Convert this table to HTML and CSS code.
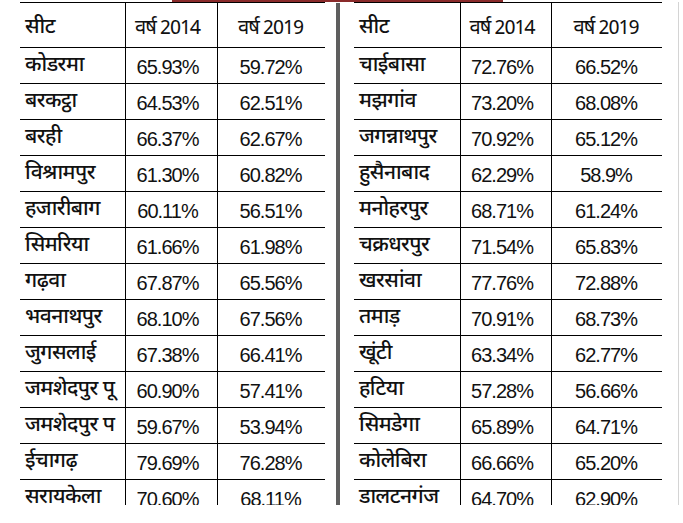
FILE: index.html
```html
<!DOCTYPE html>
<html lang="hi">
<head>
<meta charset="utf-8">
<title>मतदान प्रतिशत</title>
<link rel="stylesheet" href="styles.css">
</head>
<body>
<div class="page">
  <div class="redbar"></div>
  <div class="tables">
    <div class="tbl tbl-left">
      <div class="cell head name">सीट</div><div class="cell head num c2">वर्ष 2014</div><div class="cell head num c3">वर्ष 2019</div>
      <div class="cell name">कोडरमा</div><div class="cell num c2">65.93%</div><div class="cell num c3">59.72%</div>
      <div class="cell name">बरकट्ठा</div><div class="cell num c2">64.53%</div><div class="cell num c3">62.51%</div>
      <div class="cell name">बरही</div><div class="cell num c2">66.37%</div><div class="cell num c3">62.67%</div>
      <div class="cell name">विश्रामपुर</div><div class="cell num c2">61.30%</div><div class="cell num c3">60.82%</div>
      <div class="cell name">हजारीबाग</div><div class="cell num c2">60.11%</div><div class="cell num c3">56.51%</div>
      <div class="cell name">सिमरिया</div><div class="cell num c2">61.66%</div><div class="cell num c3">61.98%</div>
      <div class="cell name">गढ़वा</div><div class="cell num c2">67.87%</div><div class="cell num c3">65.56%</div>
      <div class="cell name">भवनाथपुर</div><div class="cell num c2">68.10%</div><div class="cell num c3">67.56%</div>
      <div class="cell name">जुगसलाई</div><div class="cell num c2">67.38%</div><div class="cell num c3">66.41%</div>
      <div class="cell name">जमशेदपुर पू</div><div class="cell num c2">60.90%</div><div class="cell num c3">57.41%</div>
      <div class="cell name">जमशेदपुर प</div><div class="cell num c2">59.67%</div><div class="cell num c3">53.94%</div>
      <div class="cell name">ईचागढ़</div><div class="cell num c2">79.69%</div><div class="cell num c3">76.28%</div>
      <div class="cell name">सरायकेला</div><div class="cell num c2">70.60%</div><div class="cell num c3">68.11%</div>
    </div>
    <div class="divider"></div>
    <div class="tbl tbl-right">
      <div class="cell head name">सीट</div><div class="cell head num c2">वर्ष 2014</div><div class="cell head num c3">वर्ष 2019</div>
      <div class="cell name">चाईबासा</div><div class="cell num c2">72.76%</div><div class="cell num c3">66.52%</div>
      <div class="cell name">मझगांव</div><div class="cell num c2">73.20%</div><div class="cell num c3">68.08%</div>
      <div class="cell name">जगन्नाथपुर</div><div class="cell num c2">70.92%</div><div class="cell num c3">65.12%</div>
      <div class="cell name">हुसैनाबाद</div><div class="cell num c2">62.29%</div><div class="cell num c3">58.9%</div>
      <div class="cell name">मनोहरपुर</div><div class="cell num c2">68.71%</div><div class="cell num c3">61.24%</div>
      <div class="cell name">चक्रधरपुर</div><div class="cell num c2">71.54%</div><div class="cell num c3">65.83%</div>
      <div class="cell name">खरसांवा</div><div class="cell num c2">77.76%</div><div class="cell num c3">72.88%</div>
      <div class="cell name">तमाड़</div><div class="cell num c2">70.91%</div><div class="cell num c3">68.73%</div>
      <div class="cell name">खूंटी</div><div class="cell num c2">63.34%</div><div class="cell num c3">62.77%</div>
      <div class="cell name">हटिया</div><div class="cell num c2">57.28%</div><div class="cell num c3">56.66%</div>
      <div class="cell name">सिमडेगा</div><div class="cell num c2">65.89%</div><div class="cell num c3">64.71%</div>
      <div class="cell name">कोलेबिरा</div><div class="cell num c2">66.66%</div><div class="cell num c3">65.20%</div>
      <div class="cell name">डालटनगंज</div><div class="cell num c2">64.70%</div><div class="cell num c3">62.90%</div>
    </div>
    <div class="edge"></div>
  </div>
</div>
</body>
</html>
```

FILE: styles.css
```css
html, body {
  margin: 0;
  padding: 0;
  background: #ffffff;
}
.page {
  position: relative;
  width: 683px;
  height: 523px;
  overflow: hidden;
  font-family: "Noto Sans Devanagari", "Lohit Devanagari", "Noto Sans", "Liberation Sans", sans-serif;
  color: #111;
}
.redbar {
  position: absolute;
  top: 0;
  left: 172px;
  width: 331px;
  height: 2px;
  background: #8a2a2a;
}
.tables {
  display: flex;
  align-items: flex-start;
  padding-top: 2px;
}
.tbl {
  display: grid;
  grid-auto-rows: 36px;
  height: 503px;
  overflow: hidden;
  border-top: 1px solid #000;
  box-sizing: border-box;
}
.tbl-left {
  margin-left: 20px;
  grid-template-columns: 105px 92px 108px;
  grid-template-rows: 45px;
}
.tbl-right {
  margin-left: 14px;
  grid-template-columns: 106px 91px 111px;
  grid-template-rows: 45px;
}
.divider {
  width: 4px;
  height: 502px;
  margin-left: 11px;
  margin-top: 1px;
  background: #5e5e5e;
}
.edge {
  width: 1px;
  height: 503px;
  margin-left: 16px;
  background: #d4d4d4;
}
.cell {
  box-sizing: border-box;
  border-bottom: 1px solid #000;
  display: flex;
  align-items: center;
  padding-top: 2px;
  font-size: 21px;
  white-space: nowrap;
  line-height: 1;
}
.name {
  padding-left: 5px;
  letter-spacing: -0.5px;
  font-weight: 500;
}
.num {
  justify-content: center;
  border-left: 1px solid #000;
  font-family: "Liberation Sans", "Noto Sans Devanagari", sans-serif;
  font-size: 20px;
  letter-spacing: -1px;
}
.c2 {
  padding-right: 8px;
}
.c3 {
  padding-right: 2px;
}
.head {
  padding-top: 7px;
}
.head.num {
  font-family: "Noto Sans Devanagari", "Liberation Sans", sans-serif;
}
```
